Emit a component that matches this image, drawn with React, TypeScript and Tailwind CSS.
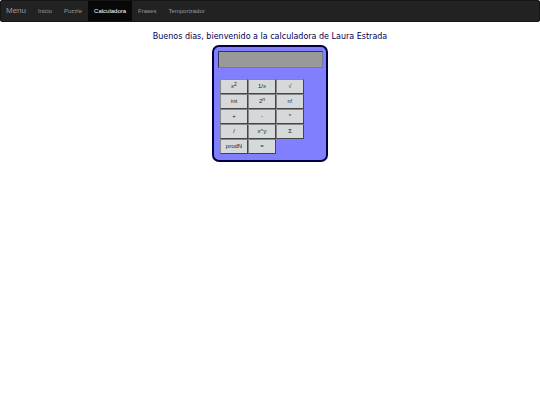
import { useState, ReactNode } from "react";

const links = ["Inicio", "Puzzle", "Calculadora", "Frases", "Temporizador"];

const keys: { id: string; label: ReactNode }[] = [
  { id: "square", label: <>x<sup className="text-[5px]">2</sup></> },
  { id: "inverse", label: "1/x" },
  { id: "sqrt", label: "√" },
  { id: "int", label: "int" },
  { id: "pow2", label: <>2<sup className="text-[5px]">n</sup></> },
  { id: "factorial", label: "n!" },
  { id: "add", label: "+" },
  { id: "sub", label: "-" },
  { id: "mul", label: "*" },
  { id: "div", label: "/" },
  { id: "pow", label: "x^y" },
  { id: "sum", label: "Σ" },
  { id: "prod", label: "prodN" },
  { id: "equals", label: "=" },
];

function Nav() {
  return (
    <nav className="flex h-[22px] items-stretch rounded-xs border border-[#161616] bg-[#222222] pl-[5px] text-[6px] text-[#999999]">
      <a href="#" className="flex items-center pr-1.5 text-[8px]">Menu</a>
      <ul className="flex">
        {links.map((link) => (
          <li key={link} className="flex">
            <a
              href="#"
              className={link === "Calculadora" ? "flex items-center bg-[#080808] px-1.5 text-white" : "flex items-center px-1.5"}
            >
              {link}
            </a>
          </li>
        ))}
      </ul>
    </nav>
  );
}

function Calculator() {
  const [value, setValue] = useState("");
  return (
    <div className="w-[116px] rounded-[7px] border-2 border-[#000040] bg-[#8080ff] pt-1 pr-[3px] pb-1.5 pl-1">
      <input
        aria-label="Pantalla"
        value={value}
        onChange={(e) => setValue(e.target.value)}
        className="block h-[17px] w-full border border-t-[#333355] border-r-[#777799] border-b-[#777799] border-l-[#333355] bg-[#999999] px-1 text-right text-[8px] outline-none"
      />
      <div className="mt-[11px] ml-0.5 grid w-[84px] grid-cols-3">
        {keys.map((key) => (
          <button
            key={key.id}
            type="button"
            className="flex h-[15px] items-center justify-center border border-t-[#888888] border-r-[#444444] border-b-[#444444] border-l-[#888888] bg-[#d5d9d9] text-[6px] text-[#222222]"
          >
            <span>{key.label}</span>
          </button>
        ))}
      </div>
    </div>
  );
}

export default function App() {
  return (
    <div className="min-h-screen bg-white font-['Liberation_Sans',Arial,sans-serif]">
      <Nav />
      <main className="flex flex-col items-center pt-[9px]">
        <h1 className="mb-0.5 font-['DejaVu_Sans',Verdana,sans-serif] text-[8px] leading-3 text-[#000050]">
          Buenos dias, bienvenido a la calculadora de Laura Estrada
        </h1>
        <Calculator />
      </main>
    </div>
  );
}
